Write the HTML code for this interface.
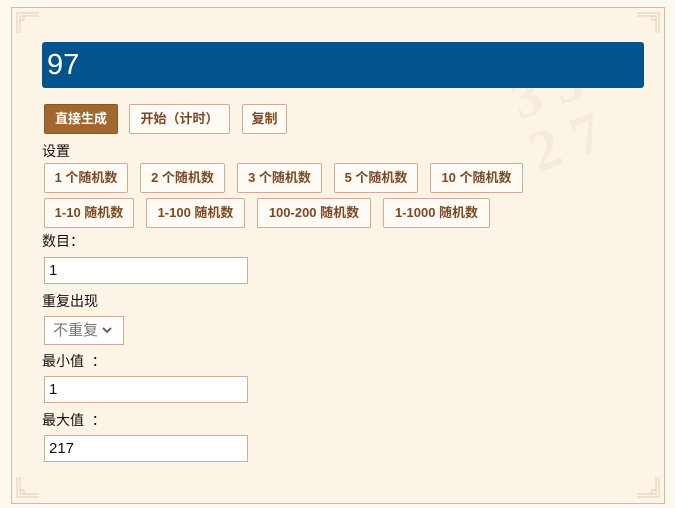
<!DOCTYPE html><html><head><meta charset="utf-8"><style>
body{margin:0;width:675px;height:508px;background:#fdf9f1;font-family:"Liberation Sans","Noto Sans CJK SC",sans-serif;position:relative;overflow:hidden}
.box{position:absolute;left:11px;top:7px;width:652px;height:495px;border:1px solid #d6b8a3;background:#fcf4e6}
.a{position:absolute}
.bar{left:42px;top:42px;width:602px;height:46px;background:#02548f;border-radius:3px;color:#fff;font-size:29px;line-height:46px;padding-left:5px;box-sizing:border-box}
.b{position:absolute;height:30px;box-sizing:border-box;border:1px solid #d3aa94;background:#fefaf4;color:#7a4a26;font-weight:bold;font-size:13px;line-height:28px;text-align:center;border-radius:2px}
.l{position:absolute;font-size:14px;color:#111;left:42px}
.i{position:absolute;left:44px;width:204px;height:27px;box-sizing:border-box;border:1px solid #d3aa94;background:#fff;font-size:15px;line-height:25px;padding-left:4px;color:#111}
</style></head><body>
<div class="box"></div>
<svg class="a" style="left:16px;top:12px" width="24" height="22"><path d="M1 21V1h22M4 21V4h19M4 8h4V4" fill="none" stroke="#e3cdb6"/></svg>
<svg class="a" style="left:636px;top:12px" width="24" height="22"><path d="M23 21V1H1M20 21V4H1M20 8h-4V4" fill="none" stroke="#e3cdb6"/></svg>
<svg class="a" style="left:16px;top:476px" width="24" height="22"><path d="M1 1v20h22M4 1v17h19M4 14h4v4" fill="none" stroke="#e3cdb6"/></svg>
<svg class="a" style="left:636px;top:476px" width="24" height="22"><path d="M23 1v20H1M20 1v17H1M20 14h-4v4" fill="none" stroke="#e3cdb6"/></svg>
<div class="a" style="left:520px;top:60px;font-size:58px;color:#f5ebdd;font-family:'Liberation Serif',serif;font-weight:bold;line-height:56px;transform:rotate(-20deg)">3 5<br>2 7</div>
<div class="a bar">97</div>
<div class="b" style="left:44px;top:104px;width:74px;background:#a0672f;color:#fff;border-color:#8a5529">直接生成</div>
<div class="b" style="left:129px;top:104px;width:101px">开始（计时）</div>
<div class="b" style="left:242px;top:104px;width:45px">复制</div>
<div class="l" style="top:141px">设置</div>
<div class="b" style="left:44px;top:163px;width:84px">1 个随机数</div>
<div class="b" style="left:140px;top:163px;width:85px">2 个随机数</div>
<div class="b" style="left:237px;top:163px;width:85px">3 个随机数</div>
<div class="b" style="left:334px;top:163px;width:84px">5 个随机数</div>
<div class="b" style="left:430px;top:163px;width:93px">10 个随机数</div>
<div class="b" style="left:44px;top:198px;width:90px">1-10 随机数</div>
<div class="b" style="left:146px;top:198px;width:99px">1-100 随机数</div>
<div class="b" style="left:257px;top:198px;width:114px">100-200 随机数</div>
<div class="b" style="left:383px;top:198px;width:107px">1-1000 随机数</div>
<div class="l" style="top:231px">数目：</div>
<div class="i" style="top:257px">1</div>
<div class="l" style="top:291px">重复出现</div>
<div class="i" style="top:316px;width:80px;height:29px;color:#777;line-height:27px;padding-left:8px">不重复 <svg width="10" height="8" style="vertical-align:1px"><path d="M1 2l4 4 4-4" fill="none" stroke="#666" stroke-width="2"/></svg></div>
<div class="l" style="top:351px">最小值 &nbsp;：</div>
<div class="i" style="top:376px">1</div>
<div class="l" style="top:410px">最大值 &nbsp;：</div>
<div class="i" style="top:435px">217</div>
</body></html>
